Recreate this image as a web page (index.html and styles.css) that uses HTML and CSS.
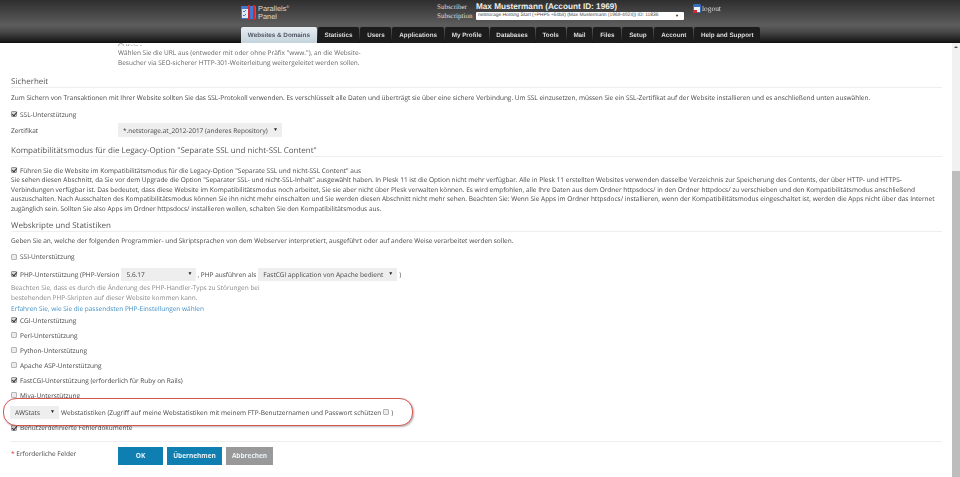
FILE: index.html
```html
<!DOCTYPE html>
<html lang="de">
<head>
    <meta charset="UTF-8">
    <meta name="viewport" content="width=device-width, initial-scale=1.0">
    <title>Parallels Panel</title>
    <link rel="stylesheet" href="styles.css">
</head>
<body>
    <header class="top">
        <div class="top-row">
            <div class="logo">
                <svg width="15" height="15" viewBox="0 0 15 15">
                    <rect x="0" y="1" width="15" height="13" rx="1" fill="#3f7ad0"/>
                    <rect x="1" y="4" width="6" height="9" fill="#dfe8f6"/>
                    <path d="M2 6l1 1 2-2M2 10l1 1 2-2" stroke="#3f7ad0" fill="none"/>
                    <rect x="7" y="0" width="2" height="15" fill="#d8262c"/>
                    <rect x="12" y="0" width="2" height="15" fill="#d8262c"/>
                </svg>
                <div class="logo-text">Parallels<sup>®</sup><br>Panel</div>
            </div>
            <div class="account">
                <div class="account-row"><span class="account-label">Subscriber</span><b class="account-name">Max Mustermann (Account ID: 1969)</b></div>
                <div class="account-row"><span class="account-label">Subscription</span>
                    <div class="sub-select"><span>netstorage Hosting Start (+PHP5 +64bit) (Max Mustermann (1969-4024)) ID: 11836</span><i class="arrow-small">▼</i></div>
                </div>
            </div>
            <a class="logout">
                <svg width="8" height="9" viewBox="0 0 8 9">
                    <rect width="8" height="9" rx="1.5" fill="#3570c0"/>
                    <rect x="1" y="3" width="6" height="5" fill="#f2f2f2"/>
                    <rect x="0" y="6" width="4" height="3" fill="#d8262c"/>
                </svg>
                logout
            </a>
        </div>
        <nav class="tabs">
            <a class="tab active">Websites &amp; Domains</a>
            <a class="tab">Statistics</a>
            <a class="tab">Users</a>
            <a class="tab">Applications</a>
            <a class="tab">My Profile</a>
            <a class="tab">Databases</a>
            <a class="tab">Tools</a>
            <a class="tab">Mail</a>
            <a class="tab">Files</a>
            <a class="tab">Setup</a>
            <a class="tab">Account</a>
            <a class="tab">Help and Support</a>
        </nav>
    </header>

    <div class="main">
        <div class="content">
            <div class="cut-top">
                <div class="cut-radio"><i class="radio"></i> Keine</div>
                <p class="cut-text">Wählen Sie die URL aus (entweder mit oder ohne Präfix "www."), an die Website-<br>Besucher via SEO-sicherer HTTP-301-Weiterleitung weitergeleitet werden sollen.</p>
            </div>

            <h3>Sicherheit</h3>
            <p class="para">Zum Sichern von Transaktionen mit Ihrer Website sollten Sie das SSL-Protokoll verwenden. Es verschlüsselt alle Daten und überträgt sie über eine sichere Verbindung. Um SSL einzusetzen, müssen Sie ein SSL-Zertifikat auf der Website installieren und es anschließend unten auswählen.</p>
            <div class="check-row ssl-row"><i class="check on"></i><span>SSL-Unterstützung</span></div>
            <div class="cert-row">
                <span class="cert-label">Zertifikat</span>
                <div class="select cert-select"><span>*.netstorage.at_2012-2017 (anderes Repository)</span><i class="arrow">▼</i></div>
            </div>

            <h3 class="h-compat">Kompatibilitätsmodus für die Legacy-Option "Separate SSL und nicht-SSL Content"</h3>
            <div class="check-row compat-row"><i class="check on"></i><span>Führen Sie die Website im Kompatibilitätsmodus für die Legacy-Option "Separate SSL und nicht-SSL Content" aus</span></div>
            <p class="para compat-text">Sie sehen diesen Abschnitt, da Sie vor dem Upgrade die Option "Separater SSL- und nicht-SSL-Inhalt" ausgewählt haben. In Plesk 11 ist die Option nicht mehr verfügbar. Alle in Plesk 11 erstellten Websites verwenden dasselbe Verzeichnis zur Speicherung des Contents, der über HTTP- und HTTPS-<br>Verbindungen verfügbar ist. Das bedeutet, dass diese Website im Kompatibilitätsmodus noch arbeitet, Sie sie aber nicht über Plesk verwalten können. Es wird empfohlen, alle Ihre Daten aus dem Ordner httpsdocs/ in den Ordner httpdocs/ zu verschieben und den Kompatibilitätsmodus anschließend<br>auszuschalten. Nach Ausschalten des Kompatibilitätsmodus können Sie ihn nicht mehr einschalten und Sie werden diesen Abschnitt nicht mehr sehen. Beachten Sie: Wenn Sie Apps im Ordner httpsdocs/ installieren, wenn der Kompatibilitätsmodus eingeschaltet ist, werden die Apps nicht über das Internet<br>zugänglich sein. Sollten Sie also Apps im Ordner httpsdocs/ installieren wollen, schalten Sie den Kompatibilitätsmodus aus.</p>

            <h3 class="h-scripts">Webskripte und Statistiken</h3>
            <p class="para">Geben Sie an, welche der folgenden Programmier- und Skriptsprachen von dem Webserver interpretiert, ausgeführt oder auf andere Weise verarbeitet werden sollen.</p>
            <div class="check-row ssi-row"><i class="check"></i><span>SSI-Unterstützung</span></div>
            <div class="check-row php-row">
                <i class="check on"></i><span>PHP-Unterstützung (PHP-Version</span>
                <div class="select php-select"><span>5.6.17</span><i class="arrow">▼</i></div>
                <span class="php-as">, PHP ausführen als</span>
                <div class="select handler-select"><span>FastCGI application von Apache bedient</span><i class="arrow">▼</i></div>
                <span>)</span>
            </div>
            <p class="hint">Beachten Sie, dass es durch die Änderung des PHP-Handler-Typs zu Störungen bei<br>bestehenden PHP-Skripten auf dieser Website kommen kann.</p>
            <a class="link">Erfahren Sie, wie Sie die passendsten PHP-Einstellungen wählen</a>
            <div class="check-list">
                <div class="check-row"><i class="check on"></i><span>CGI-Unterstützung</span></div>
                <div class="check-row"><i class="check"></i><span>Perl-Unterstützung</span></div>
                <div class="check-row"><i class="check"></i><span>Python-Unterstützung</span></div>
                <div class="check-row"><i class="check"></i><span>Apache ASP-Unterstützung</span></div>
                <div class="check-row"><i class="check on"></i><span>FastCGI-Unterstützung (erforderlich für Ruby on Rails)</span></div>
                <div class="check-row"><i class="check"></i><span>Miva-Unterstützung</span></div>
            </div>
            <div class="check-row errors-row"><i class="check on"></i><span>Benutzerdefinierte Fehlerdokumente</span></div>
            <div class="marker">
                <div class="select stats-select"><span>AWStats</span><i class="arrow">▼</i></div>
                <span>Webstatistiken (Zugriff auf meine Webstatistiken mit meinem FTP-Benutzernamen und Passwort schützen</span>
                <i class="check"></i><span>)</span>
            </div>

            <div class="form-foot">
                <div class="required"><span class="star">*</span> Erforderliche Felder</div>
                <div class="buttons">
                    <button class="btn btn-ok">OK</button>
                    <button class="btn btn-apply">Übernehmen</button>
                    <button class="btn btn-cancel">Abbrechen</button>
                </div>
            </div>
        </div>
        <div class="scrollbar">
            <div class="scroll-track"><i class="scroll-arrow"></i></div>
            <div class="scroll-thumb"></div>
        </div>
    </div>
</body>
</html>
```

FILE: styles.css
```css
* {
    box-sizing: border-box;
}
html, body {
    height: 100%;
}
body {
    margin: 0;
    font-family: "Open Sans", Arial, sans-serif;
    font-size: 6.5px;
    color: #444;
    background: #fff;
    display: flex;
    flex-direction: column;
    overflow: hidden;
    text-rendering: geometricPrecision;
    filter: blur(0.3px);
}
p {
    margin: 0;
}

/* top bar */
.top {
    height: 43px;
    flex: none;
    background: linear-gradient(#2e2e2e, #5d5d5d 60%, #4a4a4a 75%, #161616);
    border-bottom: 1px solid #111;
    padding-left: 241px;
}
.top-row {
    height: 27px;
    display: flex;
}
.logo {
    width: 196px;
    display: flex;
    align-items: flex-start;
    padding-top: 5px;
}
.logo-text {
    margin-left: 2px;
    color: #ddd;
    font: 7.4px/8px "Liberation Sans", Arial, sans-serif;
}
.logo-text sup {
    font-size: 4px;
    line-height: 0;
}
.account {
    width: 256px;
    padding-top: 2px;
}
.account-row {
    display: flex;
    align-items: center;
    height: 9px;
    color: #ddd;
    font: 7px "Liberation Serif", serif;
}
.account-label {
    width: 39px;
}
.account-name {
    color: #eee;
    font: bold 8.2px "Liberation Sans", Arial, sans-serif;
}
.sub-select {
    width: 208px;
    height: 8px;
    background: #fff;
    border-radius: 1px;
    color: #444;
    font: 4.9px/8px "Liberation Sans", Arial, sans-serif;
    padding: 0 5px 0 2px;
    display: flex;
    justify-content: space-between;
}
.arrow-small {
    font-style: normal;
    font-size: 4px;
    color: #222;
}
.logout {
    padding-top: 4px;
    color: #ddd;
    font: 7.4px "Liberation Serif", serif;
    display: flex;
    gap: 1px;
    height: 13px;
}
.tabs {
    display: flex;
    gap: 1px;
    height: 16px;
}
.tab {
    padding: 0 6.8px;
    background: #1c1c1c;
    border-radius: 2px 2px 0 0;
    color: #ddd;
    font: bold 6.3px/17px "Liberation Sans", Arial, sans-serif;
}
.tab.active {
    background: linear-gradient(#e8eef2, #c3d3dc);
    color: #556;
}

/* page */
.main {
    flex: 1;
    display: flex;
    min-height: 0;
}
.content {
    flex: 1;
    position: relative;
    padding: 0 10px 0 11px;
    overflow: hidden;
}
.scrollbar {
    width: 8px;
    flex: none;
    background: #f1f1f1;
    display: flex;
    flex-direction: column;
}
.scroll-track {
    height: 128px;
    display: flex;
    justify-content: center;
    padding-top: 3px;
}
.scroll-arrow {
    width: 0;
    height: 0;
    border: solid transparent;
    border-width: 0 2px 2px;
    border-bottom-color: #555;
}
.scroll-thumb {
    flex: 1;
    background: #bdbdbd;
}

.cut-top {
    color: #666;
    height: 32px;
    padding-left: 107px;
}
.cut-radio {
    height: 3px;
    overflow: hidden;
    line-height: 1px;
}
.cut-text {
    line-height: 10px;
    margin-top: 2px;
}
.radio {
    display: inline-block;
    width: 6px;
    height: 6px;
    border: 1px solid #aaa;
    border-radius: 50%;
}
h3 {
    margin: 0 0 5px;
    height: 13px;
    padding-top: 1px;
    font-weight: 400;
    font-size: 8px;
    line-height: 12px;
    color: #555;
    border-bottom: 1px solid #eee;
}
.para {
    line-height: 10px;
}
.check-row {
    display: flex;
    align-items: center;
    gap: 3px;
    height: 10px;
    white-space: nowrap;
}
.check {
    width: 6px;
    height: 6px;
    flex: none;
    border: 1px solid #b5b5b5;
    border-radius: 1px;
    background: #ececec;
    position: relative;
}
.check.on {
    background: #d8d8d8;
    border-color: #999;
}
.check.on::after {
    content: "";
    position: absolute;
    left: 1px;
    top: -1px;
    width: 2px;
    height: 4px;
    border: solid #333;
    border-width: 0 1px 1px 0;
    transform: rotate(40deg);
}
.select {
    height: 14px;
    background: #eee;
    display: flex;
    align-items: center;
    justify-content: space-between;
    padding: 0 4px 0 5px;
    color: #444;
}
.arrow {
    font-style: normal;
    font-size: 5px;
    color: #222;
}
.ssl-row {
    margin-top: 6px;
}
.cert-row {
    display: flex;
    align-items: center;
    margin-top: 4px;
    height: 14px;
}
.cert-label {
    width: 107px;
}
.cert-select {
    width: 164px;
}
.h-compat {
    margin-top: 7px;
}
.compat-row {
    margin-top: 8px;
}
.compat-text {
    line-height: 9.7px;
}
.h-scripts {
    margin-top: 5px;
    margin-bottom: 4px;
}
.ssi-row {
    margin-top: 6px;
}
.php-row {
    margin-top: 6px;
    height: 13px;
    gap: 2px;
}
.php-row .check {
    margin-right: 1px;
}
.php-as {
    margin-left: -1px;
}
.php-select {
    width: 75px;
    height: 13px;
}
.handler-select {
    width: 139px;
    height: 13px;
}
.hint {
    margin-top: 2px;
    color: #888;
    line-height: 10px;
}
.link {
    display: block;
    margin-top: 1px;
    margin-bottom: -1px;
    line-height: 10px;
    color: #3f8fc5;
}
.check-list .check-row {
    height: 15px;
}
.stats-select {
    width: 49px;
    height: 13px;
}
.errors-row {
    margin-top: 20px;
}
.form-foot {
    display: flex;
    align-items: flex-start;
    margin-top: 8px;
    padding-top: 5px;
    border-top: 1px solid #eee;
}
.required {
    width: 107px;
    padding-top: 2px;
    line-height: 10px;
}
.star {
    color: #d33;
}
.buttons {
    display: flex;
    gap: 4px;
}
.btn {
    height: 18px;
    border: 0;
    padding: 0;
    color: #e8f2f7;
    font: bold 6.5px "Open Sans", Arial, sans-serif;
}
.btn-ok {
    width: 45px;
    background: #0e7fb0;
}
.btn-apply {
    width: 55px;
    background: #0e7fb0;
}
.btn-cancel {
    width: 47px;
    background: #999;
}

/* red marker drawn over the form, it blanks what lies under it */
.marker {
    position: absolute;
    left: 3px;
    top: 355px;
    width: 410px;
    height: 28px;
    padding-left: 6px;
    display: flex;
    align-items: center;
    gap: 2px;
    white-space: nowrap;
    background: #fff;
    border: 1.5px solid #d9534f;
    border-radius: 13px;
    box-shadow: 1px 1px 2px rgba(0, 0, 0, 0.3);
}
```
